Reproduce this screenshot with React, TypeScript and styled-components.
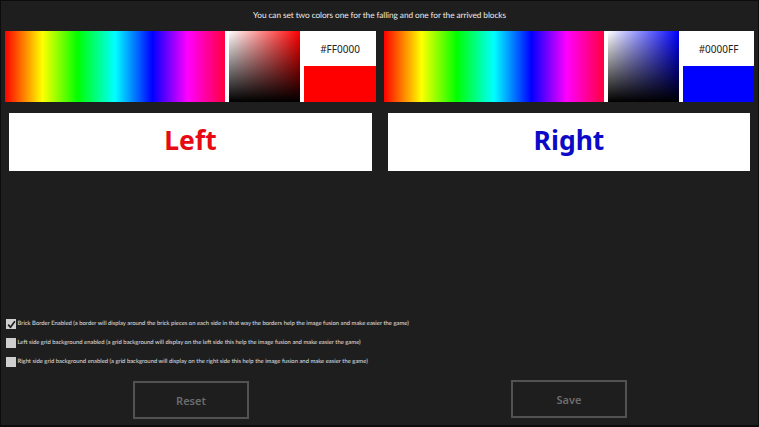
import React from 'react';
import styled, { createGlobalStyle } from 'styled-components';

const GlobalStyle = createGlobalStyle`
  html, body {
    margin: 0;
    padding: 0;
    background: #1e1e1e;
  }
  * { box-sizing: border-box; }
`;

const Page = styled.div`
  width: 759px;
  height: 427px;
  overflow: hidden;
  background: #1e1e1e;
  border: 1px solid #0c0c0c;
  border-bottom-width: 2px;
  padding: 8px 4px 0 4px;
  font-family: 'Noto Sans', 'Open Sans', sans-serif;
  color: #fff;
  display: flex;
  flex-direction: column;
`;

const Title = styled.div`
  height: 22px;
  line-height: 12px;
  font-family: Lato, 'Noto Sans', sans-serif;
  font-size: 8.3px;
  letter-spacing: -0.08px;
  text-rendering: geometricPrecision;
  text-align: center;
  color: #ececec;
`;

const Columns = styled.div`
  display: grid;
  grid-template-columns: 371px 370px;
  column-gap: 8px;
`;

const Side = styled.div`
  display: flex;
  flex-direction: column;
`;

const Picker = styled.div`
  height: 71px;
  display: flex;
  background: #fff;
`;

const HueBar = styled.div`
  width: 220px;
  background: linear-gradient(
    to right,
    #ff0000 0%,
    #ffff00 17%,
    #00ff00 33%,
    #00ffff 50%,
    #0000ff 67%,
    #ff00ff 83%,
    #ff0040 100%
  );
`;

const ShadePanel = styled.div<{ $hue: string }>`
  width: 71px;
  margin-left: 4px;
  background:
    linear-gradient(to bottom, rgba(0, 0, 0, 0), #000),
    linear-gradient(to right, #fff, ${({ $hue }) => $hue});
`;

const ValueColumn = styled.div`
  flex: 1;
  display: flex;
  flex-direction: column;
`;

const HexLabel = styled.div`
  height: 35px;
  display: flex;
  align-items: center;
  justify-content: center;
  padding-left: 4px;
  font-size: 10px;
  color: #222;
`;

const Swatch = styled.div<{ $color: string }>`
  height: 36px;
  margin-left: 4px;
  background: ${({ $color }) => $color};
`;

const Preview = styled.div<{ $color: string }>`
  height: 58px;
  margin: 11px 4px 0 4px;
  padding-bottom: 4px;
  background: #fff;
  display: flex;
  align-items: center;
  justify-content: center;
  font-size: 26.5px;
  font-weight: 700;
  color: ${({ $color }) => $color};
`;

const Options = styled.div`
  margin-top: 148px;
  display: flex;
  flex-direction: column;
  gap: 9px;
  padding-left: 1px;
`;

const OptionRow = styled.div`
  height: 10px;
  display: flex;
  align-items: center;
  gap: 1.5px;
  font-family: Lato, 'Noto Sans', sans-serif;
  font-size: 5.9px;
  line-height: 10px;
  text-rendering: geometricPrecision;
  color: #e0e0e0;
  white-space: nowrap;
`;

const CheckBox = styled.div`
  width: 10px;
  height: 10px;
  flex: none;
  background: #cfcfcf;
  display: flex;
  align-items: center;
  justify-content: center;
`;

const Actions = styled.div`
  margin-top: 14px;
  display: grid;
  grid-template-columns: 371px 370px;
  column-gap: 8px;
`;

const GhostButton = styled.div<{ $indent: number; $lift?: number }>`
  width: 116px;
  height: 38px;
  margin-left: ${({ $indent }) => $indent}px;
  margin-top: ${({ $lift }) => -($lift ?? 0)}px;
  border: 2px solid #525252;
  display: flex;
  align-items: center;
  justify-content: center;
  font-size: 11px;
  font-weight: 600;
  color: #6c6c6c;
`;

const options = [
  {
    label:
      'Brick Border Enabled (a border will display around the brick pieces on each side in that way the borders help the image fusion and make easier the game)',
    checked: true,
  },
  {
    label:
      'Left side grid background enabled (a grid background will display on the left side this help the image fusion and make easier the game)',
    checked: false,
  },
  {
    label:
      'Right side grid background enabled (a grid background will display on the right side this help the image fusion and make easier the game)',
    checked: false,
  },
];

const ColorSide: React.FC<{ hex: string; label: string; text: string }> = ({ hex, label, text }) => (
  <Side>
    <Picker>
      <HueBar />
      <ShadePanel $hue={hex} />
      <ValueColumn>
        <HexLabel>{hex}</HexLabel>
        <Swatch $color={hex} />
      </ValueColumn>
    </Picker>
    <Preview $color={text}>{label}</Preview>
  </Side>
);

const App: React.FC = () => (
  <Page>
    <GlobalStyle />
    <Title>You can set two colors one for the falling and one for the arrived blocks</Title>
    <Columns>
      <ColorSide hex="#FF0000" label="Left" text="#e60a12" />
      <ColorSide hex="#0000FF" label="Right" text="#0a0ac8" />
    </Columns>
    <Options>
      {options.map((option) => (
        <OptionRow key={option.label}>
          <CheckBox>
            {option.checked && (
              <svg width="9" height="9" viewBox="0 0 9 9">
                <path d="M1.2 4.6 L3.5 7.2 L7.9 1.2" fill="none" stroke="#1a1a1a" strokeWidth="1.6" />
              </svg>
            )}
          </CheckBox>
          {option.label}
        </OptionRow>
      ))}
    </Options>
    <Actions>
      <GhostButton $indent={128}>Reset</GhostButton>
      <GhostButton $indent={127} $lift={1}>Save</GhostButton>
    </Actions>
  </Page>
);

export default App;
